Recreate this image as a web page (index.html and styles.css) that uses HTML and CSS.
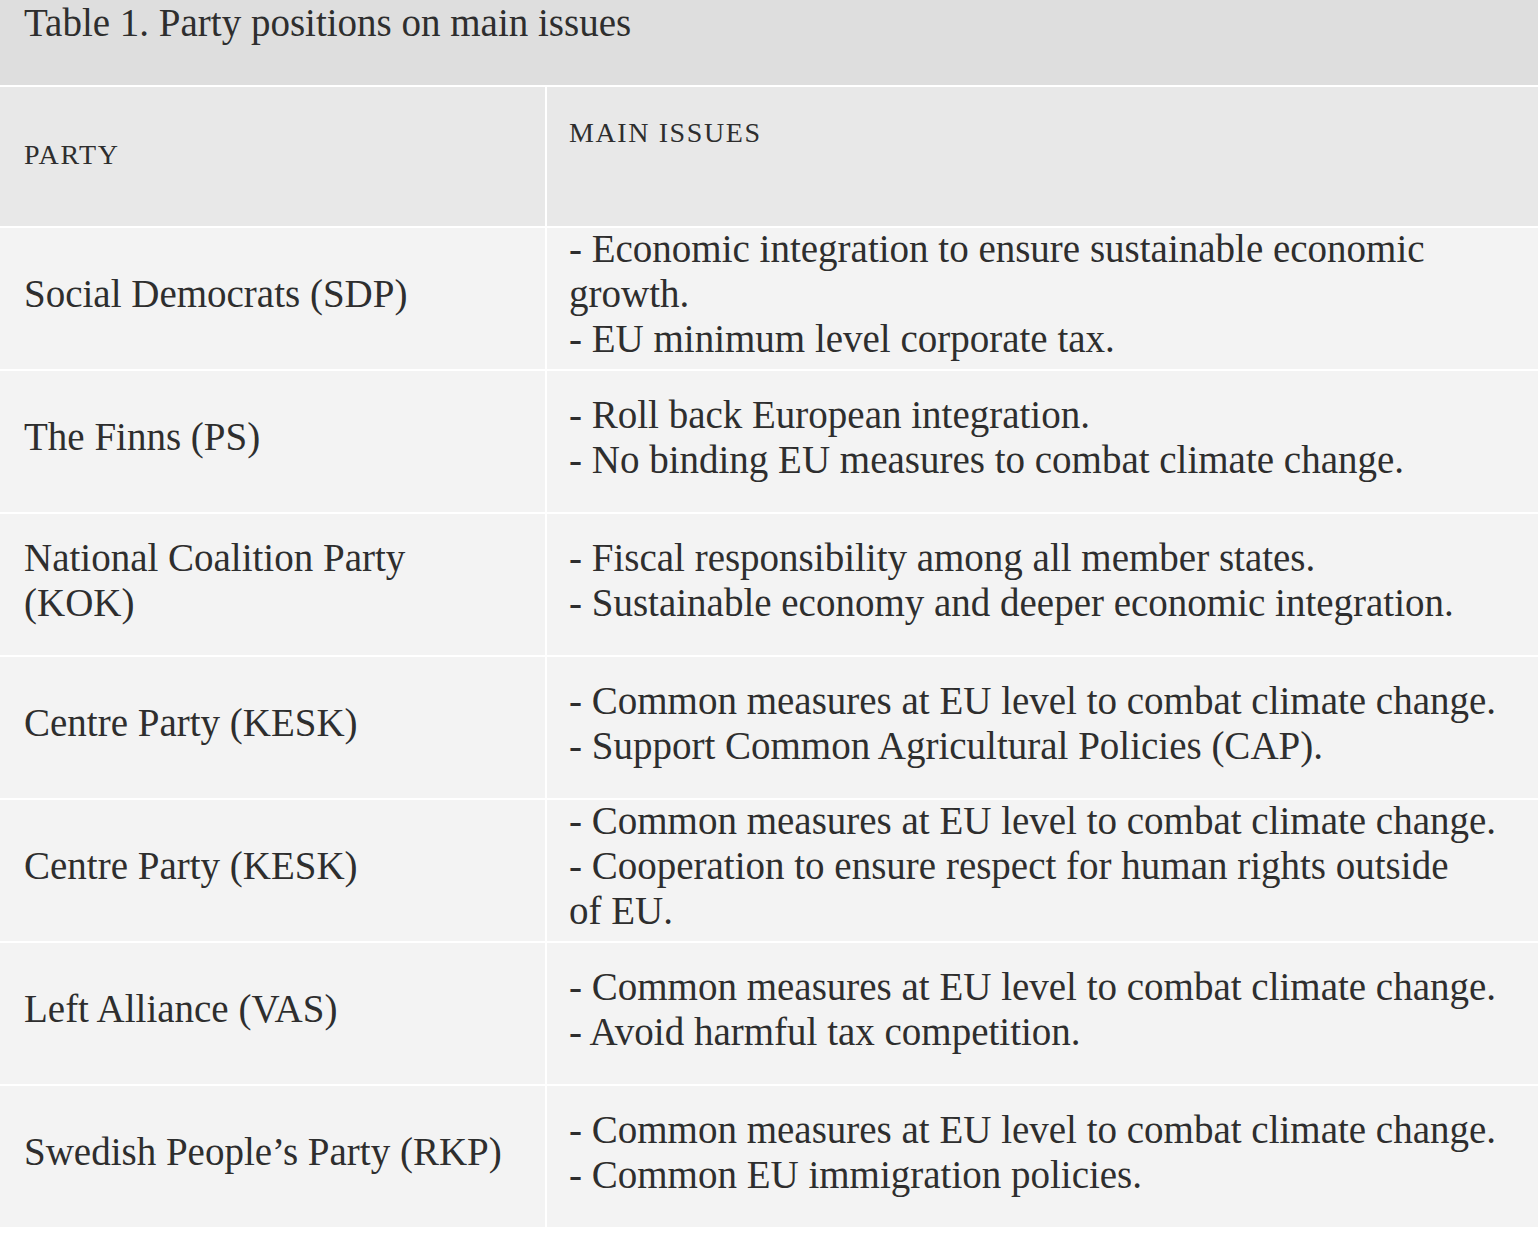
FILE: index.html
```html
<!DOCTYPE html>
<html lang="en">
<head>
<meta charset="utf-8">
<title>Party positions</title>
<link rel="stylesheet" href="styles.css">
</head>
<body>
<table class="issues">
  <caption class="issues-caption">Table 1. Party positions on main issues</caption>
  <thead>
    <tr class="head-row">
      <th class="col-party"><div class="cell">Party</div></th>
      <th class="col-issues"><div class="cell">Main issues<br>&nbsp;</div></th>
    </tr>
  </thead>
  <tbody>
    <tr>
      <td class="col-party"><div class="cell">Social Democrats (SDP)</div></td>
      <td class="col-issues"><div class="cell">- Economic integration to ensure sustainable economic growth.<br>- EU minimum level corporate tax.</div></td>
    </tr>
    <tr>
      <td class="col-party"><div class="cell">The Finns (PS)</div></td>
      <td class="col-issues"><div class="cell">- Roll back European integration.<br>- No binding EU measures to combat climate change.</div></td>
    </tr>
    <tr>
      <td class="col-party"><div class="cell">National Coalition Party (KOK)</div></td>
      <td class="col-issues"><div class="cell">- Fiscal responsibility among all member states.<br>- Sustainable economy and deeper economic integration.</div></td>
    </tr>
    <tr>
      <td class="col-party"><div class="cell">Centre Party (KESK)</div></td>
      <td class="col-issues"><div class="cell">- Common measures at EU level to combat climate change.<br>- Support Common Agricultural Policies (CAP).</div></td>
    </tr>
    <tr>
      <td class="col-party"><div class="cell">Centre Party (KESK)</div></td>
      <td class="col-issues"><div class="cell">- Common measures at EU level to combat climate change.<br>- Cooperation to ensure respect for human rights outside<br>of EU.</div></td>
    </tr>
    <tr>
      <td class="col-party"><div class="cell">Left Alliance (VAS)</div></td>
      <td class="col-issues"><div class="cell">- Common measures at EU level to combat climate change.<br>- Avoid harmful tax competition.</div></td>
    </tr>
    <tr>
      <td class="col-party"><div class="cell">Swedish People’s Party (RKP)</div></td>
      <td class="col-issues"><div class="cell">- Common measures at EU level to combat climate change.<br>- Common EU immigration policies.</div></td>
    </tr>
  </tbody>
</table>
</body>
</html>
```
FILE: styles.css
```css
html, body {
  margin: 0;
  padding: 0;
  background: #ffffff;
}

body {
  font-family: "Liberation Serif", "Times New Roman", serif;
  color: #2e2e2e;
}

.issues {
  width: 1538px;
  border-collapse: separate;
  border-spacing: 0;
  table-layout: fixed;
}

.issues-caption {
  caption-side: top;
  text-align: left;
  background: #dedede;
  font-size: 39px;
  line-height: 45px;
  padding: 0 24px 40px;
  color: #2e2e2e;
}

.issues th,
.issues td {
  border-top: 2px solid #ffffff;
  vertical-align: middle;
  text-align: left;
}

.issues th {
  background: #e8e8e8;
  font-weight: normal;
  text-transform: uppercase;
  font-size: 28px;
  letter-spacing: 1.6px;
  line-height: 45px;
  height: 139px;
  padding: 0 24px;
}

.issues th .cell {
  margin: -2px 0 2px;
}

.issues td {
  background: #f3f3f3;
  font-size: 39px;
  line-height: 45px;
  height: 141px;
  padding: 0 24px;
}

.issues td .cell {
  margin: -5px 0 5px;
}

.col-party {
  width: 497px;
}

.issues .col-issues {
  border-left: 2px solid #ffffff;
  padding-left: 22px;
  padding-right: 24px;
}
```
